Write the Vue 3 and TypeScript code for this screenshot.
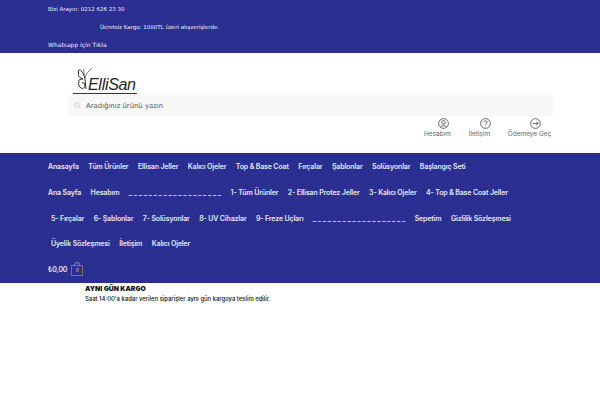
<template>
  <div class="page">
    <div class="topbar">
      <div class="top-line">Bizi Arayın: 0212 626 23 30</div>
      <div class="top-line shipping">Ücretsiz Kargo: 1000TL üzeri alışverişlerde.</div>
      <div class="top-line whatsapp">Whatsapp için Tıkla</div>
    </div>

    <header class="header">
      <div class="logo">
        <svg class="butterfly" width="16" height="24" viewBox="0 0 16 24" fill="none" stroke="#222" stroke-width="1">
          <path d="M8 11C7 6 4 1 2 2C0.5 3 2 5 1.5 6C0.5 8 3 10 6 11C3 11 1 12 2 14C1 16 2 19 4 20C6 21 8 20 8 17C8 15 6 14 5 15" />
          <path d="M8 11L9 21" />
          <path d="M8 10C9 6 11 3 15 0.5" stroke-width="0.6" />
          <path d="M7.5 7C7 5 7 3 6.5 1" stroke-width="0.5" />
        </svg>
        <span class="logo-text">ElliSan</span>
      </div>

      <div class="search">
        <svg width="7" height="7" viewBox="0 0 10 10" fill="none" stroke="#ccc" stroke-width="1.3">
          <circle cx="4.2" cy="4.2" r="3" />
          <path d="M6.5 6.5L9 9" />
        </svg>
        <span>Aradığınız ürünü yazın</span>
      </div>

      <div class="actions">
        <div class="action account">
          <svg width="11" height="11" viewBox="0 0 12 12" fill="none" stroke="#333" stroke-width="0.8">
            <circle cx="6" cy="6" r="5.3" />
            <circle cx="6" cy="4.8" r="2" />
            <path d="M2.6 9.7C3.4 8 8.6 8 9.4 9.7" />
          </svg>
          <span>Hesabım</span>
        </div>
        <div class="action contact">
          <svg width="11" height="11" viewBox="0 0 12 12" fill="none" stroke="#333" stroke-width="0.8">
            <circle cx="6" cy="6" r="5.3" />
            <path d="M4.2 4.6C4.4 2.6 7.8 2.8 7.8 4.6C7.8 5.8 6 5.8 6 7.4" />
            <path d="M6 8.4V9.2" />
          </svg>
          <span>İletişim</span>
        </div>
        <div class="action checkout">
          <svg width="11" height="11" viewBox="0 0 12 12" fill="none" stroke="#333" stroke-width="0.8">
            <circle cx="6" cy="6" r="5.3" />
            <path d="M3 6H9M6.8 3.8L9 6L6.8 8.2" />
          </svg>
          <span>Ödemeye Geç</span>
        </div>
      </div>
    </header>

    <nav class="nav">
      <div v-for="(row, i) in menuRows" :key="i" class="nav-row" :class="{ indented: i > 1 }">
        <a
          v-for="item in row"
          :key="item"
          class="nav-item"
          :class="{ divider: item === dashes }"
        >{{ item }}</a>
      </div>
      <div class="nav-row cart-row">
        <span class="price">₺0,00</span>
        <span class="cart">
          <span class="cart-handle"></span>
          0
        </span>
      </div>
    </nav>

    <section class="notice">
      <h4>AYNI GÜN KARGO</h4>
      <p>Saat 14:00'a kadar verilen siparişler aynı gün kargoya teslim edilir.</p>
    </section>
  </div>
</template>

<script setup lang="ts">
const dashes = '_ _ _ _ _ _ _ _ _ _ _ _ _ _ _ _ _ _ _'

const menuRows: string[][] = [
  ['Anasayfa', 'Tüm Ürünler', 'Ellisan Jeller', 'Kalıcı Ojeler', 'Top & Base Coat', 'Fırçalar', 'Şablonlar', 'Solüsyonlar', 'Başlangıç Seti'],
  ['Ana Sayfa', 'Hesabım', dashes, '1- Tüm Ürünler', '2- Ellisan Protez Jeller', '3- Kalıcı Ojeler', '4- Top & Base Coat Jeller'],
  ['5- Fırçalar', '6- Şablonlar', '7- Solüsyonlar', '8- UV Cihazlar', '9- Freze Uçları', dashes, 'Sepetim', 'Gizlilik Sözleşmesi'],
  ['Üyelik Sözleşmesi', 'İletişim', 'Kalıcı Ojeler']
]
</script>

<style>
html,
body {
  margin: 0;
  background: #fff;
  overflow: hidden;
}
</style>

<style scoped>
.page {
  width: 600px;
  height: 400px;
  overflow: hidden;
  font-family: "Inter", "Noto Sans", sans-serif;
}

.topbar {
  box-sizing: border-box;
  height: 53px;
  padding-left: 48px;
  background: #2b2f92;
  color: #eeeef8;
  font-family: "DejaVu Sans", sans-serif;
  font-size: 5.5px;
}

.top-line {
  height: 18px;
  line-height: 18px;
}

.shipping {
  padding-left: 52px;
}

.whatsapp {
  font-size: 6px;
}

.header {
  box-sizing: border-box;
  height: 100px;
  padding: 14px 47px 0 68px;
  background: #fff;
}

.logo {
  display: flex;
  align-items: flex-end;
  width: 64px;
  height: 26px;
  margin-left: 5px;
  border-bottom: 1px solid #333;
}

.butterfly {
  margin-left: 4px;
  margin-bottom: 1px;
  flex: none;
}

.logo-text {
  margin-left: -5px;
  margin-bottom: 1px;
  font-family: "Liberation Sans", sans-serif;
  font-style: italic;
  font-size: 16px;
  line-height: 15px;
  letter-spacing: -0.3px;
  color: #222;
}

.search {
  display: flex;
  align-items: center;
  gap: 5px;
  height: 21px;
  margin-top: 1px;
  padding-left: 6px;
  background: #f7f7f7;
  font-family: "DejaVu Sans", sans-serif;
  font-size: 6.9px;
  color: #555;
}

.actions {
  display: flex;
  justify-content: flex-end;
  gap: 17px;
  margin-top: 2px;
  padding-right: 2px;
}

.action {
  display: flex;
  flex-direction: column;
  align-items: center;
  gap: 1px;
  font-size: 6.5px;
  color: #666;
}

.action svg {
  margin-left: 11px;
}

.account {
  width: 27px;
}

.contact {
  width: 23px;
}

.checkout {
  width: 43px;
}

.action span {
  white-space: nowrap;
}

.nav {
  box-sizing: border-box;
  height: 130px;
  padding: 1px 0 0 48px;
  background: #2b2f92;
  color: #e6e6f4;
  font-size: 7px;
  font-weight: 600;
  letter-spacing: -0.15px;
}

.nav-row {
  display: flex;
  align-items: center;
  gap: 9.5px;
  height: 25.7px;
  white-space: nowrap;
}

.divider {
  letter-spacing: -0.05px;
}

.indented {
  padding-left: 3px;
}

.price {
  font-size: 7px;
}

.cart-row {
  gap: 4px;
}

.cart {
  position: relative;
  box-sizing: border-box;
  width: 12px;
  height: 11px;
  margin-top: 1px;
  border: 1px solid #85763f;
  font-size: 5px;
  font-weight: 400;
  line-height: 9px;
  text-align: center;
  color: #ccc;
}

.cart-handle {
  position: absolute;
  top: -4px;
  left: 2px;
  width: 4px;
  height: 3px;
  border: 1px solid #7d7db0;
  border-bottom: 0;
  border-radius: 3px 3px 0 0;
}

.notice {
  padding: 1px 0 0 85px;
  color: #111;
}

.notice h4 {
  margin: 0;
  font-size: 6.8px;
  font-weight: 900;
  line-height: 10px;
}

.notice p {
  margin: 0;
  font-size: 5.9px;
  font-weight: 500;
  line-height: 10px;
}
</style>
